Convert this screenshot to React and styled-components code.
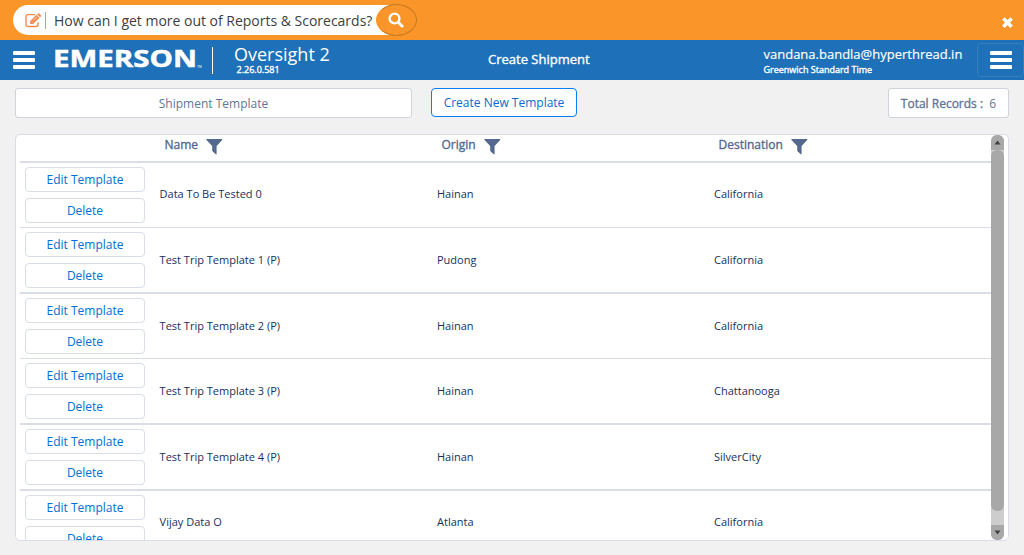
import React from "react";
import styled, { createGlobalStyle, css } from "styled-components";

const Global = createGlobalStyle`
  * { box-sizing: border-box; }
  body {
    margin: 0;
    background: #f1f1f1;
    font-family: "Open Sans", sans-serif;
    overflow: hidden;
  }
  button { font-family: inherit; margin: 0; padding: 0; cursor: pointer; }
  svg { display: block; flex: none; }
`;

const medium = css`
  font-weight: 400;
  -webkit-text-stroke: 0.35px currentColor;
`;

const Page = styled.div`
  height: 555px;
  display: flex;
  flex-direction: column;
`;

const HelpBar = styled.div`
  height: 40px;
  background: #f99529;
  display: flex;
  align-items: flex-start;
  justify-content: space-between;
  padding: 4px 10px 0 13px;
`;

const HelpSearch = styled.div`
  display: flex;
  align-items: center;
  height: 32px;
`;

const HelpField = styled.div`
  display: flex;
  align-items: center;
  width: 376px;
  height: 30px;
  padding-left: 12px;
  border-radius: 15px 0 0 15px;
  background: #fff;
`;

const HelpDivider = styled.span`
  width: 1px;
  height: 17px;
  margin: 0 8px 0 3px;
  background: #f99529;
`;

const HelpText = styled.span`
  padding-top: 1px;
  font-size: 14px;
  line-height: 20px;
  color: #3b3f44;
  white-space: nowrap;
  letter-spacing: -0.01px;
`;

const SearchButton = styled.button`
  width: 41px;
  height: 32px;
  margin-left: -13px;
  padding-right: 2px;
  border: 1px solid #c77a25;
  border-left-color: #f99529;
  border-radius: 50%;
  background: #f99529;
  display: flex;
  align-items: center;
  justify-content: center;
`;

const CloseButton = styled.button`
  margin-top: 13px;
  border: 0;
  background: none;
`;

const Header = styled.header`
  height: 40px;
  background: #1e71b8;
  color: #fff;
  display: flex;
  align-items: center;
`;

const Burger = styled.span`
  display: flex;
  flex-direction: column;
  gap: 3px;
  width: 22px;
  span {
    height: 4px;
    background: #fff;
    border-radius: 1px;
  }
`;

const Brand = styled.div`
  display: flex;
  align-items: center;
  width: 420px;
  padding-left: 13px;
`;

const LogoMark = styled.svg`
  margin-left: 18px;
  fill: #fff;
`;

const BrandDivider = styled.span`
  width: 1px;
  height: 27px;
  margin-left: 10px;
  background: #fff;
`;

const Product = styled.div`
  display: flex;
  flex-direction: column;
  padding: 0 0 2px 21px;
`;

const ProductName = styled.span`
  font-size: 18px;
  line-height: 20px;
`;

const Version = styled.span`
  padding-left: 2.5px;
  font-size: 9px;
  line-height: 11px;
  ${medium}
`;

const PageTitle = styled.div`
  flex: 1;
  padding: 0 0 3px 68px;
  font-size: 13px;
  line-height: 18px;
  ${medium}
`;

const User = styled.div`
  width: 214px;
  padding: 2px 0 0 0.5px;
  font-size: 13px;
  line-height: 17px;
  -webkit-text-stroke: 0.15px currentColor;
`;

const TimeZone = styled.div`
  font-size: 9px;
  line-height: 13px;
  ${medium}
`;

const MenuButton = styled.button`
  width: 47px;
  height: 34px;
  border: 1px solid #347fc0;
  border-radius: 4px;
  background: none;
  display: flex;
  align-items: center;
  justify-content: center;
`;

const Toolbar = styled.div`
  display: flex;
  align-items: flex-start;
  padding: 8px 15px 0;
  height: 54px;
`;

const Panel = styled.div`
  height: 30px;
  width: ${(p) => p.$width};
  border: 1px solid #ced4da;
  border-radius: 3px;
  background: #fff;
  display: flex;
  align-items: center;
  justify-content: center;
  font-size: 12px;
  color: #5f7699;
  white-space: pre;
  padding-top: 1px;
  b { ${medium} }
`;

const CreateButton = styled.button`
  width: 146px;
  height: 29px;
  margin: 0 auto 0 19px;
  border: 1px solid #0b7df0;
  border-radius: 4px;
  background: #fff;
  color: #0b6bcb;
  font-size: 12px;
`;

const TableCard = styled.div`
  display: flex;
  height: 407px;
  margin: 0 15px;
  padding: 0 4px;
  border: 1px solid #d8dde6;
  border-radius: 5px;
  background: #fff;
  overflow: hidden;
`;

const Table = styled.div`
  width: 971px;
`;

const columns = "135px 277px 277px 1fr";

const HeadRow = styled.div`
  display: grid;
  grid-template-columns: ${columns};
  height: 28px;
  border-bottom: 2px solid #d8dde6;
`;

const HeadCell = styled.div`
  display: flex;
  align-items: flex-start;
  gap: 8px;
  padding: 1px 0 0 9.5px;
  font-size: 12px;
  line-height: 18px;
  color: #54698d;
  ${medium}
  svg { margin-top: 3px; }
`;

const Row = styled.div`
  display: grid;
  grid-template-columns: ${columns};
  align-items: center;
  height: ${(p) => (p.$thick ? 66 : 65)}px;
  border-bottom: ${(p) => (p.$thick ? 2 : 1)}px solid #d8dde6;
`;

const Cell = styled.div`
  padding: 0 0 ${(p) => (p.$raised ? 3 : 1)}px ${(p) => (p.$first ? 4.6 : 5)}px;
  font-size: 11px;
  line-height: 16px;
  color: #16325c;
`;

const Actions = styled.div`
  display: flex;
  flex-direction: column;
  gap: 6px;
  align-self: start;
  padding: 4px 10px 0 5px;
`;

const ActionButton = styled.button`
  height: 25px;
  padding-bottom: 1px;
  border: 1px solid #d8dde6;
  border-radius: 4px;
  background: #fff;
  color: #0070d2;
  font-size: 12px;
`;

const ScrollTrack = styled.div`
  width: 13px;
  height: 405px;
  display: flex;
  flex-direction: column;
  border-radius: 6px;
  background: #cdcdcd;
  overflow: hidden;
`;

const ScrollArrow = styled.span`
  height: 15px;
  background: #a8a8a8;
  display: flex;
  align-items: center;
  justify-content: center;
`;

const ScrollThumb = styled.span`
  height: 361px;
  margin-bottom: auto;
  border-radius: 6px;
  background: #a8a8a8;
`;

const BurgerIcon = () => (
  <Burger>
    <span />
    <span />
    <span />
  </Burger>
);

const EditIcon = () => (
  <svg width="17" height="15" viewBox="0 0 17 15" fill="none" stroke="#f58a4b">
    <path d="M13 9.2V11.5Q13 13.5 11 13.5H3Q1 13.5 1 11.5V3.6Q1 1.6 3 1.6H10" strokeWidth="1.4" />
    <path d="M5.2 11V8L11.4 1.8L14.4 4.8L8.2 11Z" fill="#f58a4b" stroke="none" />
    <path d="M6.9 8.7L7.6 9.4M8.3 7.3L11.8 3.8" stroke="#fff" strokeWidth=".7" />
    <path d="M12 1.2L12.9 .4Q13.5 -.1 14.1 .4L15.9 2.2Q16.4 2.8 15.9 3.4L15 4.2Z" fill="#f58a4b" stroke="none" />
  </svg>
);

const SearchIcon = () => (
  <svg width="16" height="16" viewBox="0 0 16 16" fill="none" stroke="#fff">
    <circle cx="6.5" cy="6.5" r="4.9" strokeWidth="2.4" />
    <path d="M10.3 10.3L14.2 14.2" strokeWidth="2.8" strokeLinecap="round" />
  </svg>
);

const CloseIcon = () => (
  <svg width="13" height="12" viewBox="0 0 13 12">
    <path d="M2.4 1.6L10.6 9.8M10.6 1.6L2.4 9.8" stroke="#fff" strokeWidth="3.6" />
  </svg>
);

const FilterIcon = () => (
  <svg width="17" height="16" viewBox="0 0 17 16">
    <path d="M.8 0H15.9Q16.7 .2 16.2 .9L10.6 6.9V15Q10.4 15.7 9.8 15.3L6.7 12.6Q6.2 12.2 6.2 11.6V6.9L.5 .9Q0 .2 .8 0Z" fill="#54698d" />
  </svg>
);

const Logo = () => (
  <LogoMark width="149" height="22" viewBox="0 0 149 22">
    <text x="0" y="18.2" fontFamily="Open Sans" fontWeight="700" fontSize="24" textLength="144" lengthAdjust="spacingAndGlyphs" stroke="#fff" strokeWidth=".5">EMERSON</text>
    <text x="144" y="18.6" fontFamily="Open Sans" fontSize="3.5">TM</text>
  </LogoMark>
);

const Arrow = ({ down }) => (
  <svg width="7" height="5" viewBox="0 0 7 5">
    <path d={down ? "M.5 .5H6.5L3.5 4.5Z" : "M.5 4.5H6.5L3.5 .5Z"} fill="#404040" />
  </svg>
);

const templates = [
  ["Data To Be Tested 0", "Hainan", "California"],
  ["Test Trip Template 1 (P)", "Pudong", "California"],
  ["Test Trip Template 2 (P)", "Hainan", "California"],
  ["Test Trip Template 3 (P)", "Hainan", "Chattanooga"],
  ["Test Trip Template 4 (P)", "Hainan", "SilverCity"],
  ["Vijay Data O", "Atlanta", "California"],
];

const thickRows = [1, 3, 4];
const raisedRows = [0, 5];

export default function App() {
  return (
    <Page>
      <Global />
      <HelpBar>
        <HelpSearch>
          <HelpField>
            <EditIcon />
            <HelpDivider />
            <HelpText>How can I get more out of Reports &amp; Scorecards?</HelpText>
          </HelpField>
          <SearchButton aria-label="Search"><SearchIcon /></SearchButton>
        </HelpSearch>
        <CloseButton aria-label="Close"><CloseIcon /></CloseButton>
      </HelpBar>
      <Header>
        <Brand>
          <BurgerIcon />
          <Logo />
          <BrandDivider />
          <Product>
            <ProductName>Oversight 2</ProductName>
            <Version>2.26.0.581</Version>
          </Product>
        </Brand>
        <PageTitle>Create Shipment</PageTitle>
        <User>
          vandana.bandla@hyperthread.in
          <TimeZone>Greenwich Standard Time</TimeZone>
        </User>
        <MenuButton aria-label="Menu"><BurgerIcon /></MenuButton>
      </Header>
      <Toolbar>
        <Panel $width="397px">Shipment Template</Panel>
        <CreateButton>Create New Template</CreateButton>
        <Panel $width="121px"><b>Total Records :</b>{"  6"}</Panel>
      </Toolbar>
      <TableCard>
        <Table>
          <HeadRow>
            <span />
            {["Name", "Origin", "Destination"].map((label) => (
              <HeadCell key={label}>{label}<FilterIcon /></HeadCell>
            ))}
          </HeadRow>
          {templates.map((cells, i) => (
            <Row key={i} $thick={thickRows.includes(i)}>
              <Actions>
                <ActionButton>Edit Template</ActionButton>
                <ActionButton>Delete</ActionButton>
              </Actions>
              {cells.map((text, c) => (
                <Cell key={c} $first={c === 0} $raised={raisedRows.includes(i)}>{text}</Cell>
              ))}
            </Row>
          ))}
        </Table>
        <ScrollTrack>
          <ScrollArrow><Arrow /></ScrollArrow>
          <ScrollThumb />
          <ScrollArrow><Arrow down /></ScrollArrow>
        </ScrollTrack>
      </TableCard>
    </Page>
  );
}
